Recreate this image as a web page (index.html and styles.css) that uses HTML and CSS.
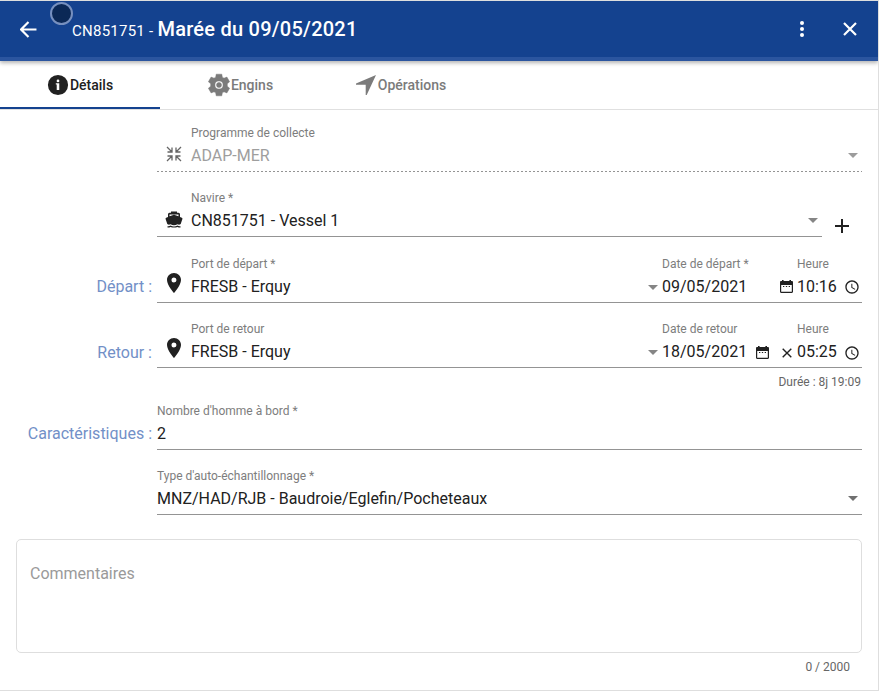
FILE: index.html
```html
<!DOCTYPE html>
<html lang="fr">
<head>
<meta charset="utf-8">
<title>Marée du 09/05/2021</title>
<link rel="stylesheet" href="styles.css">
</head>
<body>
<svg class="sprite" width="0" height="0">
  <symbol id="pin" viewBox="0 0 14 20"><path d="M7 0C3.130 0 0 3.130 0 7c0 5.250 7 13 7 13s7-7.750 7-13c0-3.870-3.130-7-7-7zm0 9.500a2.500 2.500 0 1 1 0-5 2.500 2.500 0 0 1 0 5z"/></symbol>
  <symbol id="calendar" viewBox="0 0 13 13"><path fill-rule="evenodd" d="M2 0h1.600v1h5.800V0H11v1h.8C12.500 1 13 1.500 13 2.200v9.600c0 .7-.5 1.200-1.200 1.200H1.200C.5 13 0 12.500 0 11.800V2.200C0 1.500.5 1 1.200 1H2zM1.200 5v6.800h10.600V5zM3 6h1.300v1H3zm2.850 0h1.300v1h-1.300zm2.850 0H10v1H8.700z"/></symbol>
  <symbol id="clock" viewBox="0 0 24 24"><path d="M11.990 2C6.470 2 2 6.480 2 12s4.470 10 9.990 10C17.520 22 22 17.520 22 12S17.520 2 11.990 2zM12 20c-4.420 0-8-3.580-8-8s3.580-8 8-8 8 3.580 8 8-3.580 8-8 8zm.5-13H11v6l5.250 3.150.75-1.230-4.500-2.670z"/></symbol>
</svg>
<div class="page">
  <header class="toolbar">
    <svg class="back" viewBox="0 0 16 16"><path d="M15.500 8H1.500M8 1L1 8l7 7" fill="none" stroke="#fff" stroke-width="2"/></svg>
    <h1 class="title"><small>CN851751 - </small>Marée du 09/05/2021</h1>
    <svg class="more" viewBox="0 0 4 16"><circle cx="2" cy="2" r="2"/><circle cx="2" cy="8" r="2"/><circle cx="2" cy="14" r="2"/></svg>
    <svg class="close" viewBox="0 0 14 14"><path d="M1 1l12 12M13 1L1 13" fill="none" stroke="#fff" stroke-width="2.200"/></svg>
    <span class="pointer"></span>
  </header>
  <nav class="tabs">
    <a class="tab active"><svg width="22" height="22" viewBox="0 0 24 24"><path d="M12 1a11 11 0 1 0 0 22 11 11 0 0 0 0-22zm1.400 16.500h-2.800v-6h-1v-1.300h3.800zM12 9a1.500 1.500 0 1 1 0-3 1.500 1.500 0 0 1 0 3z"/></svg>Détails</a>
    <a class="tab engins"><svg width="24" height="24" viewBox="0 0 24 24"><path fill-rule="evenodd" d="M9.200 1.200h5.600l.5 3 1.700 1 2.900-1.100 2.700 4.700-2.300 1.900v2.600l2.300 1.900-2.700 4.700-2.900-1.100-1.700 1-.5 3H9.200l-.5-3-1.700-1-2.900 1.100-2.700-4.700 2.300-1.900v-2.600L1.400 8.800l2.700-4.700L7 5.200l1.700-1zM12 7.900a4.100 4.100 0 1 0 0 8.200 4.100 4.100 0 0 0 0-8.200zm0 1.600a2.500 2.500 0 1 1 0 5 2.500 2.500 0 0 1 0-5z" stroke="currentColor" stroke-width=".5" stroke-linejoin="round"/></svg>Engins</a>
    <a class="tab operations"><svg width="20" height="20" viewBox="0 0 20 20"><path d="M20 0L0 8.600v1.100h9.700V20h1z"/></svg>Opérations</a>
  </nav>
  <main class="form">
    <div class="row">
      <div class="field disabled">
        <span class="lead"><svg width="16" height="16" viewBox="0 0 16 16"><path d="M1 1l5 5M6 1.500V6H1.500M15 1l-5 5M10 1.500V6h4.500M1 15l5-5M6 14.500V10H1.500M15 15l-5-5M10 14.500V10h4.500" fill="none" stroke="#666" stroke-width="1.300"/></svg></span>
        <div class="cell grow"><label>Programme de collecte</label><div class="value">ADAP-MER<i class="caret"></i></div></div>
      </div>
    </div>
    <div class="row">
      <div class="field">
        <span class="lead boat"><svg width="18" height="18" viewBox="0 0 18 18"><path d="M6 .5h6v1.300h1.500q1.500 0 1.500 1.500V6l1.800.7q.9.400.6 1.300L15.700 13q-1.500 1.200-3.200.2-3.500 2-7 0-1.700 1-3.200-.2L.6 8q-.3-.9.600-1.300L3 6V3.300q0-1.500 1.500-1.500H6zM4.500 3.500v1.700L9 3.800l4.500 1.400V3.500zM2.500 15.200q1.700.3 3-.6 3.500 1.700 7 0 1.300.9 3 .6v1.300q-1.700.1-3-.6-3.500 1.400-7 0-1.300.7-3 .6z"/></svg></span>
        <div class="cell grow"><label>Navire *</label><div class="value">CN851751 - Vessel 1<i class="caret"></i></div></div>
      </div>
      <button class="add" aria-label="Ajouter"></button>
    </div>
    <div class="row">
      <div class="name">Départ :</div>
      <div class="field">
        <span class="lead pin"><svg width="14" height="20"><use href="#pin"/></svg></span>
        <div class="cell grow port"><label>Port de départ *</label><div class="value">FRESB - Erquy<i class="caret"></i></div></div>
        <div class="cell date"><label>Date de départ *</label><div class="value">09/05/2021<svg class="cal last" width="13" height="13"><use href="#calendar"/></svg></div></div>
        <div class="cell time"><label>Heure</label><div class="value">10:16<svg class="clk" width="16" height="16"><use href="#clock"/></svg></div></div>
      </div>
    </div>
    <div class="row return">
      <div class="name">Retour :</div>
      <div class="field">
        <span class="lead pin"><svg width="14" height="20"><use href="#pin"/></svg></span>
        <div class="cell grow port"><label>Port de retour</label><div class="value">FRESB - Erquy<i class="caret"></i></div></div>
        <div class="cell date"><label>Date de retour</label><div class="value">18/05/2021<svg class="cal" width="13" height="13"><use href="#calendar"/></svg><svg class="clear" width="10" height="10" viewBox="0 0 10 10"><path d="M.7.7l8.600 8.600M9.300.7L.7 9.300" stroke="#212121" stroke-width="1.400"/></svg></div></div>
        <div class="cell time"><label>Heure</label><div class="value">05:25<svg class="clk" width="16" height="16"><use href="#clock"/></svg></div></div>
      </div>
    </div>
    <div class="hint">Durée : 8j 19:09</div>
    <div class="row">
      <div class="name">Caractéristiques :</div>
      <div class="field"><div class="cell grow"><label>Nombre d'homme à bord *</label><div class="value">2</div></div></div>
    </div>
    <div class="row">
      <div class="field"><div class="cell grow"><label>Type d'auto-échantillonnage *</label><div class="value">MNZ/HAD/RJB - Baudroie/Eglefin/Pocheteaux<i class="caret dark"></i></div></div></div>
    </div>
    <div class="comments">Commentaires</div>
    <div class="counter">0 / 2000</div>
  </main>
</div>
</body>
</html>
```
FILE: styles.css
```css
* { box-sizing: border-box; }
body { margin: 0; background: #fff; font-family: Roboto, sans-serif; color: #212121; }
svg { flex: none; fill: currentColor; }
.sprite { display: block; }
.page { width: 879px; height: 691px; border: 1px solid #dedede; border-left: 0; overflow: hidden; }

.toolbar { position: relative; height: 60px; display: flex; align-items: center; padding: 0 21px 0 20px; background: #14428f; border-bottom: 4px solid #2b559f; box-shadow: 0 2px 4px rgba(0,0,0,.3); color: #fff; }
.back { width: 17px; height: 17px; }
.title { flex: 1; margin: 2px 0 0 35px; font-size: 20px; line-height: 28px; font-weight: 500; letter-spacing: .25px; white-space: pre; }
.title small { font-size: 15px; font-weight: 400; letter-spacing: .25px; }
.more { width: 4px; height: 16px; margin-right: 39px; }
.close { width: 14px; height: 14px; }
.pointer { position: absolute; left: 50px; top: 1px; width: 23px; height: 23px; border: 2px solid #7790bf; border-radius: 50%; background: #0b2856; }

.tabs { display: flex; height: 49px; border-bottom: 1px solid #e0e0e0; }
.tab { width: 160px; height: 48px; display: flex; align-items: center; justify-content: center; font-size: 14px; font-weight: 500; color: #7b7b7b; gap: 1px; padding-top: 2px; border-bottom: 2px solid transparent; }
.tab.active { color: #212121; border-bottom-color: #14428f; }
.tab.engins { gap: 0; }
.tab.operations { gap: 2px; padding-left: 2px; }

.form { padding: 14px 16px 0 0; }
.row { display: flex; height: 48px; margin-bottom: 17px; padding-left: 157px; }
.row:nth-child(2) { margin-bottom: 18px; }
.row:has(.name) { padding-left: 0; }
.name { width: 157px; padding: 22px 5px 0 0; text-align: right; font-size: 16px; line-height: 20px; color: #7290c7; }
.return .name { padding-top: 23px; }
.field { flex: 1; display: flex; border-bottom: 1px solid #949494; }
.field.disabled { border-bottom: 0; background: repeating-linear-gradient(90deg, #949494 0 2px, transparent 2px 4px) bottom / 100% 1px no-repeat; }
.lead { width: 34px; padding: 22px 0 0 9px; display: flex; align-items: flex-start; }
.lead.boat { padding: 21.500px 0 0 8px; }
.lead.pin { padding: 18px 0 0 10px; }
.cell { display: flex; flex-direction: column; padding-top: 1px; }
.grow { flex: 1; }
.cell label { font-size: 12px; line-height: 16px; color: #7d7d7d; white-space: nowrap; }
.value { display: flex; align-items: center; height: 20px; margin-top: 4px; font-size: 16px; white-space: nowrap; }
.disabled .value { color: #9e9e9e; }
.caret { margin: 0 4px 0 auto; border: 5px solid transparent; border-top-color: #858585; border-bottom: 0; }
.port .caret { margin: 2px 4px 0 auto; }
.disabled .caret { border-top-color: #9c9c9c; }
.caret.dark { border-top-color: #707070; }
.date { width: 135px; }
.time { width: 65px; }
.cal { margin: 3px 0 0 9px; }
.cal.last { margin: 1px 4px 0 auto; }
.clear { margin: 4px 5px 0 auto; }
.clk { margin: 2px 2.500px 0 auto; }
.return .clk { margin-top: 4px; }
.add { width: 14px; height: 14px; margin: 30px 13px 0; padding: 0; border: 0; background: linear-gradient(#212121 0 0) center / 14px 2px no-repeat, linear-gradient(#212121 0 0) center / 2px 14px no-repeat; }
.hint { height: 17px; margin-top: -11px; margin-bottom: 11px; padding-right: 1px; text-align: right; font-size: 12px; line-height: 16px; color: #666; }
.comments { height: 114px; margin: 24px 0 0 16px; padding: 24px 13px; border: 1px solid #dedede; border-radius: 5px; font-size: 16px; line-height: 20px; color: #9a9a9a; }
.counter { padding: 6px 12px 0 0; text-align: right; font-size: 12px; line-height: 16px; color: #666; }
```
